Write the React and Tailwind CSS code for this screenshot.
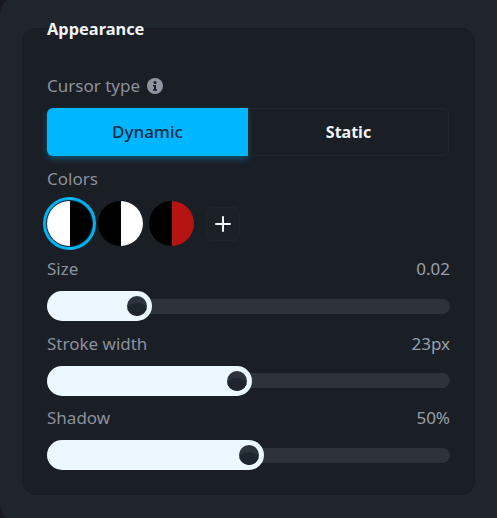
const Slider = ({ label, value, fill, thumb }) => (
  <div>
    <div className="flex justify-between items-center h-[20px] text-[17px] text-[#8b919c]">
      <span>{label}</span>
      <span className="text-[#99a0ab]">{value}</span>
    </div>
    <div className="relative h-[30px] mt-[12px] flex items-center">
      <div className="w-full h-[15px] rounded-full bg-[#2d333b]" />
      <div className="absolute left-0 top-0 h-[30px] rounded-full bg-[#ebf8ff]" style={{ width: fill }} />
      <div
        className="absolute top-[5px] w-[20px] h-[20px] rounded-full bg-[#2d333b] overflow-hidden"
        style={{ left: thumb }}
      >
        <div className="h-[14px] mt-[7px] rounded-t-[50%] bg-[#1f252d]" />
      </div>
    </div>
  </div>
);

const Swatch = ({ left, right, active }) => (
  <div
    className={`w-[45px] h-[45px] rounded-full overflow-hidden flex ${active ? 'ring-[3px] ring-[#00b4f0] ring-offset-[1px] ring-offset-[#1a1e25]' : ''}`}
  >
    <div className={`w-1/2 ${left}`} />
    <div className={`w-1/2 ${right}`} />
  </div>
);

export default function App() {
  return (
    <div className="w-[497px] h-[518px] overflow-hidden bg-[#15191f] font-['Noto_Sans',sans-serif]">
      {/* outer panel runs past the window, only its left corners show */}
      <div className="w-[520px] h-[529px] -mt-[5px] rounded-[20px] bg-[#1e252c] pt-[33px] pl-[22px]">
        <div className="w-[453px] h-[467px] rounded-[14px] bg-[#1a1e25] border border-[#181c22] pl-[24px] pr-[24px]">
          <h2 className="text-[16.4px] font-bold text-[#f0f4f8] leading-[22px] -mt-[11px]">Appearance</h2>

          <div className="flex items-center gap-[7px] mt-[35px] h-[22px] text-[17px] text-[#8b919c]">
            <span>Cursor type</span>
            <svg width="16" height="16" viewBox="0 0 16 16">
              <circle cx="8" cy="8" r="8" fill="#8f95a1" />
              <circle cx="8" cy="4.4" r="1.5" fill="#1a1e25" />
              <path d="M6 7h3v4.2h1v1.5H6v-1.5h1V8.5H6z" fill="#1a1e25" />
            </svg>
          </div>

          <div className="flex h-[48px] mt-[11px] -mr-[1px]">
            <button className="w-[201px] rounded-l-[6px] bg-[#00b7ff] text-[17px] font-medium text-[#0b2a45] shadow-[0_3px_6px_rgba(0,183,255,0.35)]">
              Dynamic
            </button>
            <button className="w-[201px] rounded-r-[6px] border border-[#22272e] text-[16px] font-bold text-[#f0f4f8]">
              Static
            </button>
          </div>

          <div className="mt-[12px] h-[22px] text-[17px] leading-[22px] text-[#8b919c]">Colors</div>

          <div className="flex items-center gap-[6px] mt-[9px] h-[49px]">
            <Swatch left="bg-white" right="bg-black" active />
            <Swatch left="bg-black" right="bg-white" />
            <Swatch left="bg-black" right="bg-[#b51412]" />
            <button className="ml-[6px] w-[34px] h-[34px] rounded-[6px] bg-[#1c2027] border border-[#20252c] flex items-center justify-center">
              <svg width="16" height="16" viewBox="0 0 16 16">
                <path d="M8 1v14M1 8h14" stroke="#f2f6fa" strokeWidth="2" strokeLinecap="round" />
              </svg>
            </button>
          </div>

          <div className="mt-[11px] flex flex-col gap-[12.5px]">
            <Slider label="Size" value="0.02" fill={105} thumb={80} />
            <Slider label="Stroke width" value="23px" fill={205} thumb={180} />
            <Slider label="Shadow" value="50%" fill={217} thumb={192} />
          </div>
        </div>
      </div>
    </div>
  );
}
